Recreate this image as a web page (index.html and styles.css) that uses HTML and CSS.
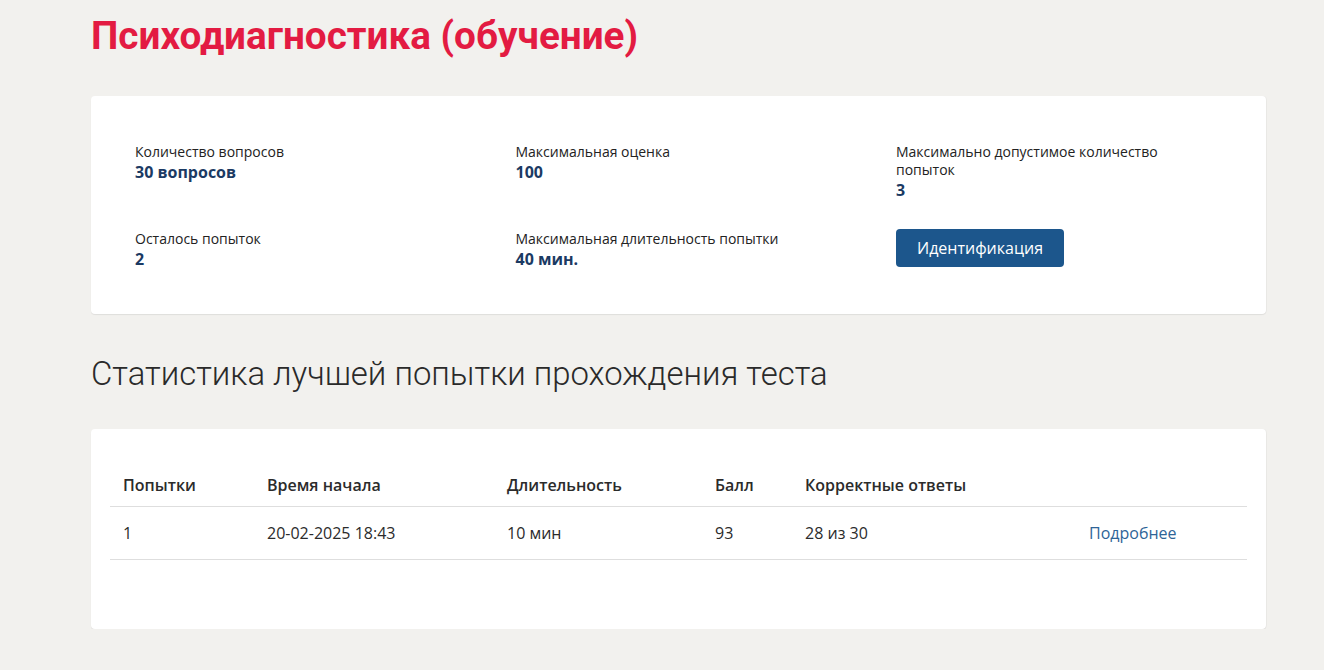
FILE: index.html
```html
<!DOCTYPE html>
<html lang="ru">
<head>
<meta charset="utf-8">
<title>Психодиагностика (обучение)</title>
<link rel="stylesheet" href="styles.css">
</head>
<body>
<main class="page">
  <h1 class="title">Психодиагностика (обучение)</h1>

  <section class="card info-card">
    <div class="info-grid">
      <div class="info-item">
        <div class="info-label">Количество вопросов</div>
        <div class="info-value">30 вопросов</div>
      </div>
      <div class="info-item">
        <div class="info-label">Максимальная оценка</div>
        <div class="info-value">100</div>
      </div>
      <div class="info-item">
        <div class="info-label">Максимально допустимое количество попыток</div>
        <div class="info-value">3</div>
      </div>
      <div class="info-item">
        <div class="info-label">Осталось попыток</div>
        <div class="info-value">2</div>
      </div>
      <div class="info-item">
        <div class="info-label">Максимальная длительность попытки</div>
        <div class="info-value">40 мин.</div>
      </div>
      <div class="info-item">
        <button class="btn" type="button">Идентификация</button>
      </div>
    </div>
  </section>

  <h2 class="subtitle">Статистика лучшей попытки прохождения теста</h2>

  <section class="card table-card">
    <table class="stats">
      <thead>
        <tr>
          <th class="c1">Попытки</th>
          <th class="c2">Время начала</th>
          <th class="c3">Длительность</th>
          <th class="c4">Балл</th>
          <th class="c5">Корректные ответы</th>
          <th class="c6"></th>
        </tr>
      </thead>
      <tbody>
        <tr>
          <td>1</td>
          <td>20-02-2025 18:43</td>
          <td>10 мин</td>
          <td>93</td>
          <td>28 из 30</td>
          <td><a class="more" href="#">Подробнее</a></td>
        </tr>
      </tbody>
    </table>
  </section>
</main>
</body>
</html>
```

FILE: styles.css
```css
* { box-sizing: border-box; }

html, body {
  margin: 0;
  padding: 0;
  background: #f2f1ee;
  font-family: "Open Sans", "Noto Sans", sans-serif;
  color: #222;
}

.page {
  width: 1175px;
  margin-left: 91px;
  padding-top: 12px;
}

.title {
  margin: 0;
  font-family: Roboto, "Noto Sans", sans-serif;
  font-weight: 700;
  font-size: 38.7px;
  line-height: 48px;
  color: #e31b42;
}

.card {
  background: #fff;
  border-radius: 4px;
  box-shadow: 0 1px 1px rgba(0, 0, 0, 0.08), 1px 0 1px rgba(0, 0, 0, 0.03);
}

.info-card {
  margin-top: 36px;
  padding: 47px 44px 44px 44px;
}

.info-grid {
  display: grid;
  grid-template-columns: 300px 300px 290px;
  column-gap: 80.5px;
  row-gap: 29px;
}

.info-label {
  font-size: 14px;
  line-height: 18px;
  color: #222;
}

.info-value {
  font-size: 16px;
  line-height: 22px;
  font-weight: 700;
  color: #1b3a63;
}

.btn {
  display: inline-block;
  height: 38px;
  width: 168px;
  margin-top: -1px;
  border: 0;
  border-radius: 4px;
  background: #1c568c;
  color: #fff;
  font-family: inherit;
  font-size: 16px;
  cursor: pointer;
}

.subtitle {
  margin: 40px 0 0 0;
  font-family: Roboto, "Noto Sans", sans-serif;
  font-weight: 300;
  font-size: 32.9px;
  line-height: 40px;
  color: #2a2a2a;
}

.table-card {
  margin-top: 35px;
  padding: 34px 19px 69px 19px;
}

.stats {
  width: 100%;
  border-collapse: collapse;
  font-size: 16px;
  table-layout: fixed;
}

.stats th {
  text-align: left;
  font-weight: 600;
  color: #2b2b2b;
  padding: 11px 13px 10px 13px;
  line-height: 22px;
  border-bottom: 1px solid #dedede;
}

.stats td {
  padding: 15px 13px 15px 13px;
  line-height: 22px;
  color: #2b2b2b;
  border-bottom: 1px solid #dedede;
}

.c1 { width: 144px; }
.c2 { width: 240px; }
.c3 { width: 208px; }
.c4 { width: 90px; }
.c5 { width: 284px; }

.more {
  color: #2e6497;
  text-decoration: none;
}
```
